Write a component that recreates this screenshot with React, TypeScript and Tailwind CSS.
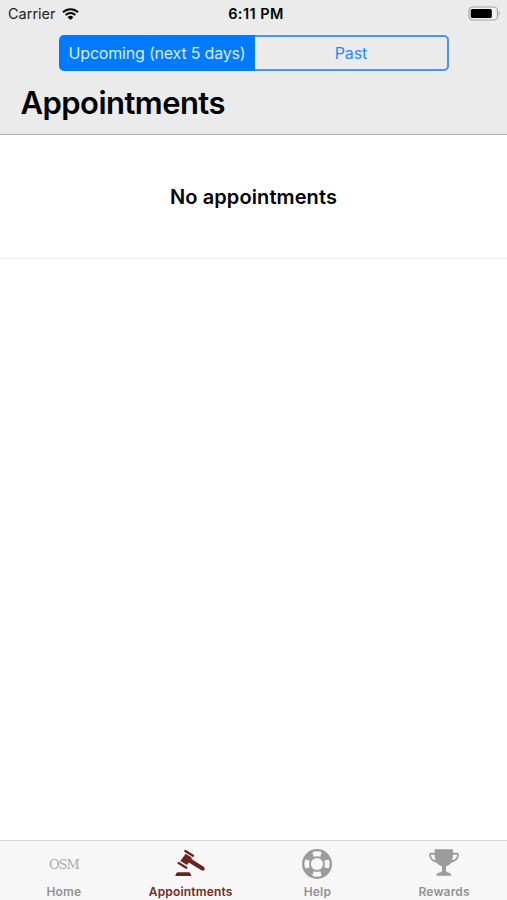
import type { ReactNode } from 'react';

function WifiIcon() {
  return (
    <svg className="ml-[6px] h-[12px] w-[17px]" viewBox="0 0 17 12" fill="none" stroke="#080808">
      <path d="M1 4.3 A10.7 10.7 0 0 1 16 4.3" strokeWidth="2.2" />
      <path d="M3.7 7.1 A6.8 6.8 0 0 1 13.3 7.1" strokeWidth="2" />
      <path d="M8.5 12 L5.6 9.2 A4.1 4.1 0 0 1 11.4 9.2 Z" fill="#080808" stroke="none" />
    </svg>
  );
}

function BatteryIcon() {
  return (
    <svg className="h-[15px] w-[33px]" viewBox="0 0 33 15">
      <rect x="1" y="1" width="28.5" height="13" rx="3.8" fill="#f2f2f2" stroke="#a3a3a3" strokeWidth="1.2" />
      <rect x="2.8" y="2.9" width="21" height="9.2" rx="1.6" fill="#000" />
      <path d="M30.7 5 Q32.8 7.5 30.7 10 Z" fill="#a3a3a3" />
    </svg>
  );
}

function GavelIcon() {
  return (
    <svg className="h-[30px] w-[32px]" viewBox="0 0 96 90" fill="#6b231d">
      <path d="M34 6 L57 20" stroke="#6b231d" strokeWidth="7" strokeLinecap="round" />
      <path d="M35 14 L54 26 L39 48 L19 36 Z" />
      <path d="M14 42 L37 56" stroke="#6b231d" strokeWidth="7" strokeLinecap="round" />
      <path d="M51 29 L89 53 Q95 58 91 63 Q87 67 81 63 L43 40 Z" />
      <path d="M10 70 H46 Q51 73 52 81 H4 Q5 73 10 70 Z" />
    </svg>
  );
}

function HelpIcon() {
  return (
    <svg className="h-[30px] w-[30px]" viewBox="0 0 30 30">
      <circle cx="15" cy="15" r="15" fill="#9c9c9c" />
      <circle cx="15" cy="15" r="6.1" fill="#f7f7f7" />
      <g fill="#f7f7f7">
        <path d="M10.4 3.3 Q15 1.4 19.6 3.3 L18.4 7.7 Q15 6.6 11.6 7.7 Z" />
        <path d="M10.4 26.7 Q15 28.6 19.6 26.7 L18.4 22.3 Q15 23.4 11.6 22.3 Z" />
        <path d="M3.3 10.4 Q1.4 15 3.3 19.6 L7.7 18.4 Q6.6 15 7.7 11.6 Z" />
        <path d="M26.7 10.4 Q28.6 15 26.7 19.6 L22.3 18.4 Q23.4 15 22.3 11.6 Z" />
      </g>
    </svg>
  );
}

function TrophyIcon() {
  return (
    <svg className="h-[27px] w-[30px]" viewBox="0 0 90 81" fill="#9c9c9c">
      <path fillRule="evenodd" d="M17 1 H72 V11 H86 Q89 11 89 15 V22 Q86 37 67 41 Q62 48 53 51 L51 54 V65 Q51 70 60 71 Q67 72 67 80 H22 Q22 72 30 71 Q39 70 39 65 V54 L37 51 Q28 48 23 41 Q4 37 1 22 V15 Q1 11 4 11 H17 Z M17 17 H6 V21 Q8 31 20 34 Q17 27 17 17 Z M72 17 Q72 27 69 34 Q81 31 84 21 V17 Z" />
    </svg>
  );
}

function Tab({ label, icon, active = false }: { label: ReactNode; icon: ReactNode; active?: boolean }) {
  return (
    <button className={`flex min-w-0 flex-1 flex-col items-center ${active ? 'text-[#742a25]' : 'text-[#929292]'}`}>
      <span className="flex h-[43px] shrink-0 items-start justify-center pt-[8px]">{icon}</span>
      <span className="pl-px text-[12px] leading-[15px] font-semibold tracking-[0.16px] whitespace-nowrap">{label}</span>
    </button>
  );
}

export default function App() {
  return (
    <div className="flex h-[900px] w-[507px] flex-col overflow-hidden bg-white font-['Inter',sans-serif] text-black">
      <header className="h-[135px] shrink-0 border-b border-[#b2b2b2] bg-[#ebebeb]">
        <div className="grid h-[28px] grid-cols-3 items-center pr-[6px] pl-[8px]">
          <div className="flex items-center text-[14.5px] text-[#222]">
            <span>Carrier</span>
            <WifiIcon />
          </div>
          <span className="pl-[3px] text-center text-[14.5px] font-semibold tracking-[0.45px]">6:11 PM</span>
          <div className="flex justify-end pb-[2px]"><BatteryIcon /></div>
        </div>
        <div className="mt-[7px] ml-[59px] flex h-[36px] w-[390px] text-[16px]">
          <button className="w-[196px] rounded-l-[5px] bg-[#007aff] whitespace-nowrap text-[#d9edff]"><span className="tracking-[-0.2px]">Upcoming (next 5 days)</span></button>
          <button className="flex-1 rounded-r-[5px] border-2 border-l-0 border-[#4597f3] text-[#258afa]"><span className="tracking-[-0.1px]">Past</span></button>
        </div>
        <h1 className="mt-[12px] ml-[20.5px] text-[31px] leading-[40px] font-semibold tracking-[-0.55px]">Appointments</h1>
      </header>
      <main className="flex-1 bg-white">
        <div className="flex h-[124px] items-center justify-center border-b border-[#e9e9e9]">
          <p className="text-[20px] leading-[28px] font-semibold tracking-[0.1px]">No appointments</p>
        </div>
      </main>
      <nav className="flex h-[60px] shrink-0 border-t border-[#d9d9d9] bg-[#f7f7f7]">
        <Tab label="Home" icon={<span className="pt-[7px] pl-px font-['DejaVu_Serif',serif] text-[13px] leading-[17px] tracking-[-1px] text-[#a8a8a8]">OSM</span>} />
        <Tab label="Appointments" icon={<GavelIcon />} active />
        <Tab label="Help" icon={<HelpIcon />} />
        <Tab label="Rewards" icon={<TrophyIcon />} />
      </nav>
    </div>
  );
}
